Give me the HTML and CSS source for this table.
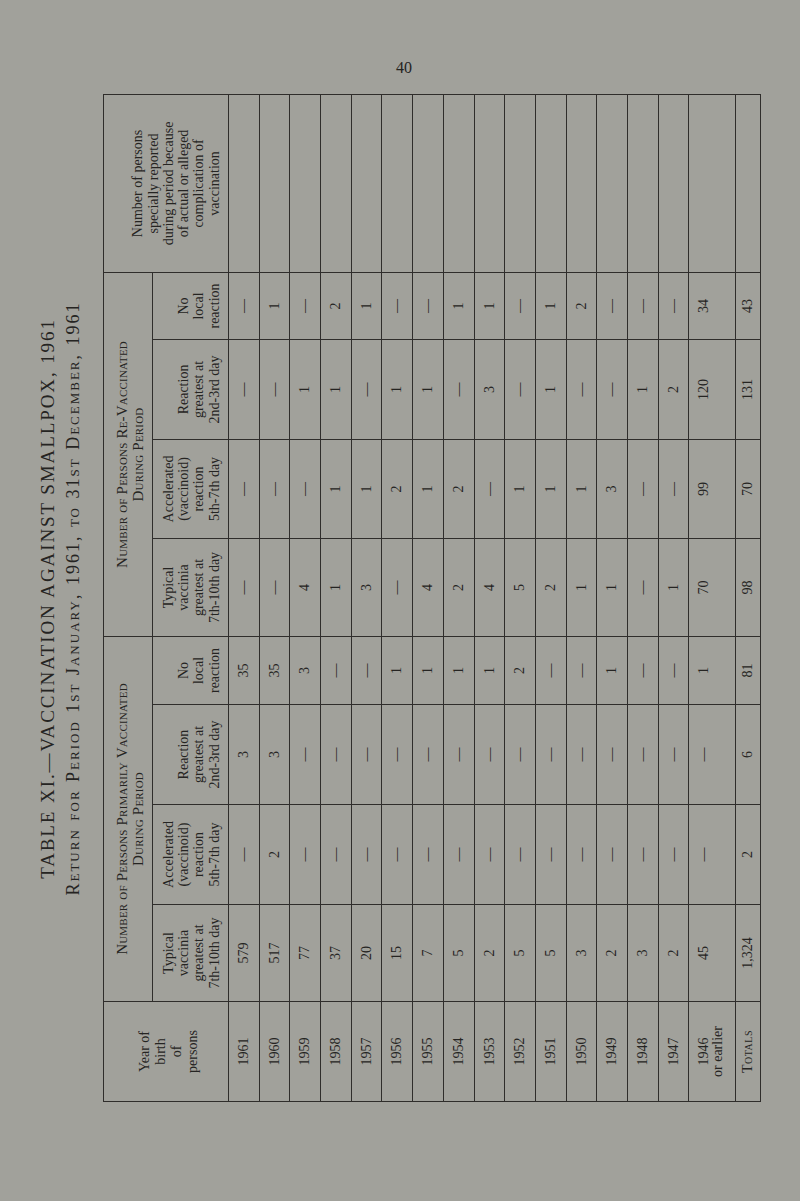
FILE: index.html
```html
<!DOCTYPE html>
<html lang="en">
<head>
<meta charset="utf-8">
<title>Table XI — Vaccination against Smallpox, 1961</title>
<link rel="stylesheet" href="styles.css">
</head>
<body>
<div class="page">
  <div class="folio">40</div>
  <div class="frame">
    <div class="sheet">
      <h1 class="title">TABLE XI.—VACCINATION AGAINST SMALLPOX, 1961</h1>
      <h2 class="subtitle">Return for Period 1st January, 1961, to 31st December, 1961</h2>
      <table class="vax">
        <colgroup>
          <col class="c-year">
          <col class="c-typ">
          <col class="c-acc">
          <col class="c-rea">
          <col class="c-no">
          <col class="c-typ2">
          <col class="c-acc2">
          <col class="c-rea">
          <col class="c-no2">
          <col class="c-spec">
        </colgroup>
        <thead>
          <tr class="hrow1">
            <th rowspan="2" class="year-h">Year of<br>birth<br>of<br>persons</th>
            <th colspan="4" class="group">Number of Persons Primarily Vaccinated<br>During Period</th>
            <th colspan="4" class="group">Number of Persons Re-Vaccinated<br>During Period</th>
            <th rowspan="2" class="sub">Number of persons<br>specially reported<br>during period because<br>of actual or alleged<br>complication of<br>vaccination</th>
          </tr>
          <tr class="hrow2">
            <th class="sub">Typical<br>vaccinia<br>greatest at<br>7th-10th day</th>
            <th class="sub">Accelerated<br>(vaccinoid)<br>reaction<br>5th-7th day</th>
            <th class="sub">Reaction<br>greatest at<br>2nd-3rd day</th>
            <th class="sub">No<br>local<br>reaction</th>
            <th class="sub">Typical<br>vaccinia<br>greatest at<br>7th-10th day</th>
            <th class="sub">Accelerated<br>(vaccinoid)<br>reaction<br>5th-7th day</th>
            <th class="sub">Reaction<br>greatest at<br>2nd-3rd day</th>
            <th class="sub">No<br>local<br>reaction</th>
          </tr>
        </thead>
        <tbody>
          <tr><td>1961</td><td>579</td><td>—</td><td>3</td><td>35</td><td>—</td><td>—</td><td>—</td><td>—</td><td></td></tr>
          <tr><td>1960</td><td>517</td><td>2</td><td>3</td><td>35</td><td>—</td><td>—</td><td>—</td><td>1</td><td></td></tr>
          <tr><td>1959</td><td>77</td><td>—</td><td>—</td><td>3</td><td>4</td><td>—</td><td>1</td><td>—</td><td></td></tr>
          <tr><td>1958</td><td>37</td><td>—</td><td>—</td><td>—</td><td>1</td><td>1</td><td>1</td><td>2</td><td></td></tr>
          <tr><td>1957</td><td>20</td><td>—</td><td>—</td><td>—</td><td>3</td><td>1</td><td>—</td><td>1</td><td></td></tr>
          <tr><td>1956</td><td>15</td><td>—</td><td>—</td><td>1</td><td>—</td><td>2</td><td>1</td><td>—</td><td></td></tr>
          <tr><td>1955</td><td>7</td><td>—</td><td>—</td><td>1</td><td>4</td><td>1</td><td>1</td><td>—</td><td></td></tr>
          <tr><td>1954</td><td>5</td><td>—</td><td>—</td><td>1</td><td>2</td><td>2</td><td>—</td><td>1</td><td></td></tr>
          <tr><td>1953</td><td>2</td><td>—</td><td>—</td><td>1</td><td>4</td><td>—</td><td>3</td><td>1</td><td></td></tr>
          <tr><td>1952</td><td>5</td><td>—</td><td>—</td><td>2</td><td>5</td><td>1</td><td>—</td><td>—</td><td></td></tr>
          <tr><td>1951</td><td>5</td><td>—</td><td>—</td><td>—</td><td>2</td><td>1</td><td>1</td><td>1</td><td></td></tr>
          <tr><td>1950</td><td>3</td><td>—</td><td>—</td><td>—</td><td>1</td><td>1</td><td>—</td><td>2</td><td></td></tr>
          <tr><td>1949</td><td>2</td><td>—</td><td>—</td><td>1</td><td>1</td><td>3</td><td>—</td><td>—</td><td></td></tr>
          <tr><td>1948</td><td>3</td><td>—</td><td>—</td><td>—</td><td>—</td><td>—</td><td>1</td><td>—</td><td></td></tr>
          <tr><td>1947</td><td>2</td><td>—</td><td>—</td><td>—</td><td>1</td><td>—</td><td>2</td><td>—</td><td></td></tr>
          <tr class="earlier"><td>1946<br>or earlier</td><td>45</td><td>—</td><td>—</td><td>1</td><td>70</td><td>99</td><td>120</td><td>34</td><td></td></tr>
          <tr class="totals"><td class="tot-label">Totals</td><td>1,324</td><td>2</td><td>6</td><td>81</td><td>98</td><td>70</td><td>131</td><td>43</td><td></td></tr>
        </tbody>
      </table>
    </div>
  </div>
</div>
</body>
</html>
```

FILE: styles.css
```css
html, body {
  margin: 0;
  padding: 0;
}

body {
  background: #a1a19b;
  font-family: "Liberation Serif", "DejaVu Serif", serif;
  color: #252422;
}

.page {
  width: 800px;
  height: 1201px;
  overflow: hidden;
  background: #a1a19b;
}

.folio {
  height: 95px;
  box-sizing: border-box;
  padding-top: 59px;
  padding-left: 8px;
  font-size: 16px;
  line-height: 18px;
  text-align: center;
}

.frame {
  width: 735px;
  height: 1007px;
  margin-left: 30px;
}

.sheet {
  width: 1007px;
  height: 735px;
  transform-origin: 0 0;
  transform: translateY(1007px) rotate(-90deg);
}

.title {
  margin: 0;
  padding-top: 8px;
  font-size: 19px;
  line-height: 20px;
  font-weight: normal;
  letter-spacing: 1.9px;
  text-align: center;
}

.subtitle {
  margin: 5px 0 0;
  font-size: 18px;
  line-height: 20px;
  font-weight: normal;
  font-variant: small-caps;
  letter-spacing: 2px;
  word-spacing: 1px;
  text-align: center;
}

.vax {
  margin-top: 20px;
  width: 1007px;
  table-layout: fixed;
  border-collapse: collapse;
}

.c-year { width: 100px; }
.c-typ { width: 97px; }
.c-acc { width: 100px; }
.c-rea { width: 100px; }
.c-no { width: 68px; }
.c-typ2 { width: 98px; }
.c-acc2 { width: 99px; }
.c-no2 { width: 67px; }
.c-spec { width: 178px; }

.vax th,
.vax td {
  border: 1px solid #2f2d2b;
  padding: 0;
  text-align: center;
  font-weight: normal;
}

.hrow1 { height: 49px; }
.hrow2 { height: 76px; }

.vax th.sub {
  vertical-align: bottom;
  font-size: 14px;
  line-height: 15.3px;
  padding-bottom: 6px;
}

.vax th.group {
  vertical-align: middle;
  font-size: 15px;
  line-height: 16px;
  font-variant: small-caps;
  letter-spacing: 0.2px;
  padding-top: 4px;
}

.vax th.year-h {
  vertical-align: middle;
  font-size: 14px;
  line-height: 16px;
  padding-top: 6px;
}

.vax tbody tr { height: 30.7px; }

.vax td {
  vertical-align: top;
  font-size: 14px;
  line-height: 16px;
  padding-top: 7px;
}

.vax tbody tr.earlier { height: 47px; }

.vax tbody tr.earlier td {
  line-height: 14px;
  padding-top: 8px;
}

.vax tbody tr.totals { height: 25px; }

.vax tbody tr.totals td {
  padding-top: 4px;
}

.tot-label {
  font-variant: small-caps;
  font-size: 15px;
  letter-spacing: 0.5px;
}
```
